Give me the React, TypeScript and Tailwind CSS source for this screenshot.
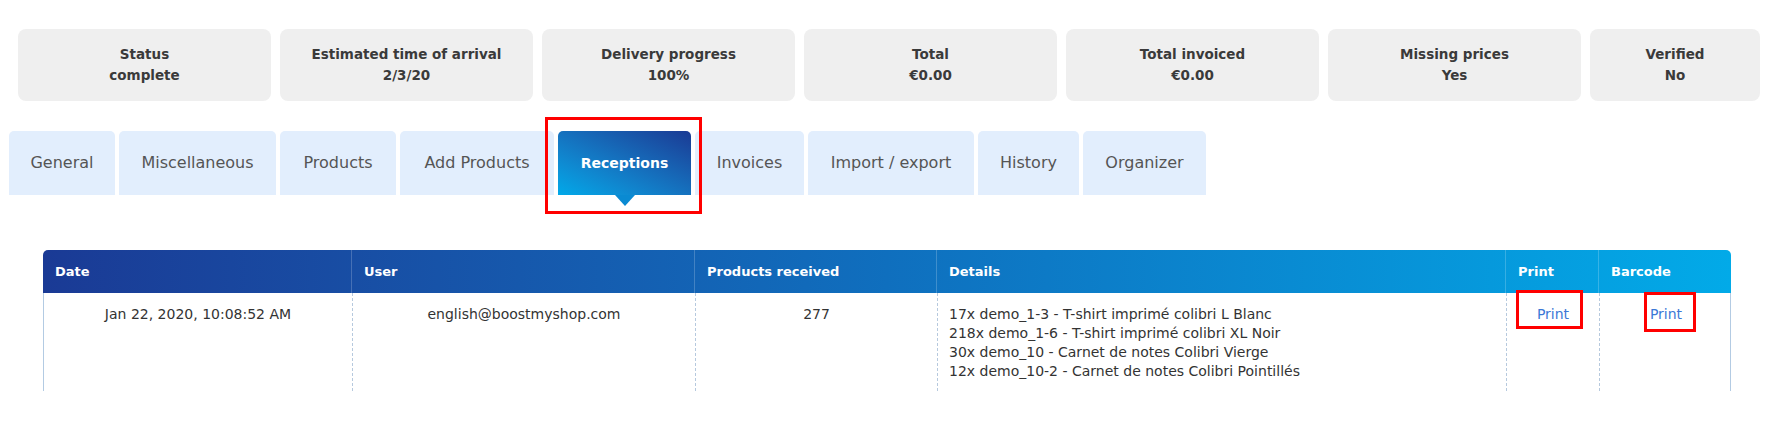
import React from "react";

const font = { fontFamily: '"DejaVu Sans", "Liberation Sans", sans-serif' };

const cards = [
  ["Status", "complete"],
  ["Estimated time of arrival", "2/3/20"],
  ["Delivery progress", "100%"],
  ["Total", "€0.00"],
  ["Total invoiced", "€0.00"],
  ["Missing prices", "Yes"],
  ["Verified", "No"],
];

const tabs: { label: string; w: string; active?: boolean }[] = [
  { label: "General", w: "w-[106px]" },
  { label: "Miscellaneous", w: "w-[157px]" },
  { label: "Products", w: "w-[116px]" },
  { label: "Add Products", w: "w-[154px]" },
  { label: "Receptions", w: "w-[133px]", active: true },
  { label: "Invoices", w: "w-[109px]" },
  { label: "Import / export", w: "w-[166px]" },
  { label: "History", w: "w-[101px]" },
  { label: "Organizer", w: "w-[123px]" },
];

export default function App() {
  return (
    <div className="bg-white w-[1776px] h-[431px] overflow-hidden" style={font}>
      {/* summary cards */}
      <div className="flex gap-[9px] pl-[18px] pt-[29px]">
        {cards.map(([t, v], i) => (
          <div
            key={t}
            className={`${i === 6 ? "w-[170px]" : "w-[253px]"} h-[72px] shrink-0 rounded-[8px] bg-[#efefef] flex flex-col items-center justify-center text-[13.5px] leading-[21px] font-bold text-[#3a3a3a]`}
          >
            <div>{t}</div>
            <div>{v}</div>
          </div>
        ))}
      </div>

      {/* tabs */}
      <div className="flex gap-[4px] pl-[9px] mt-[30px]">
        {tabs.map((t) =>
          t.active ? (
            <div key={t.label} className={`${t.w} relative h-[64px] shrink-0`}>
              <div className="h-full rounded-t-[5px] bg-gradient-to-tr from-[#00a9e9] to-[#1a3a94] flex items-center justify-center text-white font-bold text-[14px]">
                {t.label}
              </div>
              <div className="absolute left-1/2 top-[64px] -translate-x-1/2 w-0 h-0 border-l-[10px] border-r-[10px] border-t-[11px] border-l-transparent border-r-transparent border-t-[#0a8ad2]" />
              <div className="absolute left-[-13px] top-[-14px] w-[157px] h-[97px] border-[3px] border-[#ff0000]" />
            </div>
          ) : (
            <div
              key={t.label}
              className={`${t.w} h-[64px] shrink-0 rounded-t-[5px] bg-[#e2eefd] flex items-center justify-center text-[#555] text-[16px]`}
            >
              {t.label}
            </div>
          )
        )}
      </div>

      {/* table */}
      <div className="ml-[43px] mt-[55px] w-[1688px]">
        <div className="grid grid-cols-[308px_343px_242px_569px_93px_133px] h-[43px] rounded-t-[5px] bg-gradient-to-r from-[#1a3a95] via-[#0f6fbe] to-[#02aae8] text-white font-bold text-[13px]">
          {["Date", "User", "Products received", "Details", "Print", "Barcode"].map((h, i) => (
            <div
              key={h}
              className={`flex items-center pl-[12px] ${i > 0 ? "border-l border-white/20" : ""}`}
            >
              {h}
            </div>
          ))}
        </div>
        <div className="grid grid-cols-[308px_343px_242px_569px_93px_133px] h-[98px] text-[14px] leading-[19px] text-[#333] border-l border-r border-[#b3cbe3]">
          <div className="pt-[12px] text-center">Jan 22, 2020, 10:08:52 AM</div>
          <div className="pt-[12px] text-center border-l border-dashed border-[#b6c9de]">
            english@boostmyshop.com
          </div>
          <div className="pt-[12px] text-center border-l border-dashed border-[#b6c9de]">277</div>
          <div className="pt-[12px] pl-[11px] border-l border-dashed border-[#b6c9de]">
            <div>17x demo_1-3 - T-shirt imprimé colibri L Blanc</div>
            <div>218x demo_1-6 - T-shirt imprimé colibri XL Noir</div>
            <div>30x demo_10 - Carnet de notes Colibri Vierge</div>
            <div>12x demo_10-2 - Carnet de notes Colibri Pointillés</div>
          </div>
          <div className="relative pt-[12px] text-center border-l border-dashed border-[#b6c9de] text-[#3b78d6]">
            Print
            <div className="absolute left-[9px] top-[-3px] w-[67px] h-[39px] border-[3px] border-[#ff0000]" />
          </div>
          <div className="relative pt-[12px] text-center border-l border-dashed border-[#b6c9de] text-[#3b78d6]">
            Print
            <div className="absolute left-[44px] top-[-1px] w-[52px] h-[40px] border-[3px] border-[#ff0000]" />
          </div>
        </div>
      </div>
    </div>
  );
}
